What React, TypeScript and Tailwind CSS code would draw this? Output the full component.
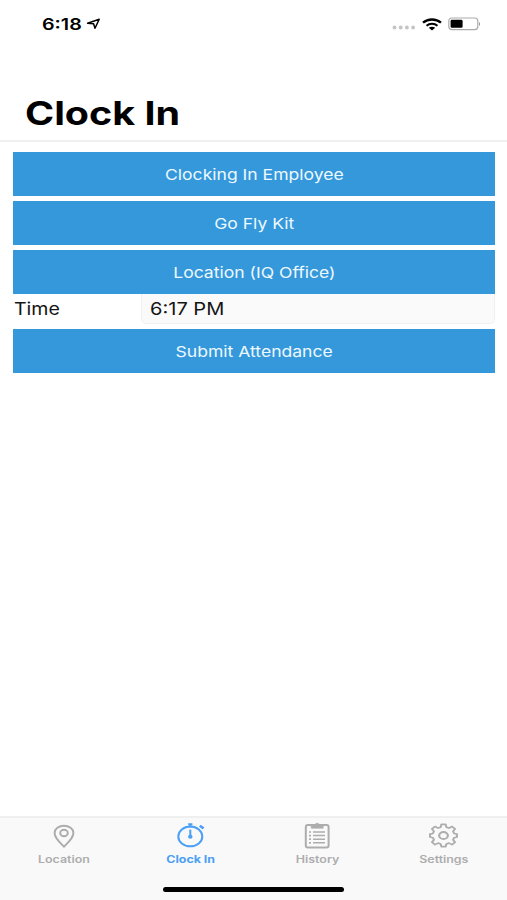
import React from 'react';

const LocationIcon: React.FC = () => (
  <svg width="22" height="24" viewBox="0 0 22 24" fill="none" stroke="currentColor">
    <path d="M11 22.6C8.3 19.8 1.6 14.3 1.6 8.9C1.6 4.9 5.8 1.7 11 1.7s9.4 3.2 9.4 7.2c0 5.4-6.7 10.9-9.4 13.7z" strokeWidth="2" />
    <ellipse cx="11" cy="9" rx="3.8" ry="3.2" strokeWidth="2" />
  </svg>
);

const ClockIcon: React.FC = () => (
  <svg width="28" height="25" viewBox="0 0 28 25" fill="none" stroke="currentColor">
    <ellipse cx="13.3" cy="13.4" rx="12" ry="9.9" strokeWidth="2" />
    <path d="M13.3 .4v4M11.2 1.2h4.2" strokeWidth="2" />
    <path d="M22.8 2.8l3.8 2.6" strokeWidth="2.6" />
    <path d="M13.3 6.6v7" strokeWidth="2" />
    <ellipse cx="13.3" cy="13.8" rx="2.2" ry="2" fill="currentColor" stroke="none" />
  </svg>
);

const HistoryIcon: React.FC = () => (
  <svg width="26" height="27" viewBox="0 0 26 27" fill="none" stroke="currentColor">
    <rect x="1.8" y="3" width="22.8" height="22.6" rx="2" strokeWidth="2" />
    <path d="M7.2 3.6h3.2C10.8 2 11.8 1.2 13.2 1.2s2.4.8 2.8 2.4h3.2v2.6h-12z" fill="currentColor" strokeWidth="0.6" />
    <path d="M9 10h12M9 13.6h12M9 17.2h12M9 20.8h12" strokeWidth="1.5" />
    <path d="M5 10h2M5 13.6h2M5 17.2h2M5 20.8h2" strokeWidth="1.7" />
  </svg>
);

const SettingsIcon: React.FC = () => (
  <svg
    width="29"
    height="25"
    viewBox="0 0 30 32"
    preserveAspectRatio="none"
    fill="none"
    stroke="currentColor"
    strokeLinejoin="round"
  >
    <path
      d="M12.8 1.8h4.4l.8 3.6 2.6 1.1 3.2-2 3.1 3.1-2 3.2 1.1 2.6 3 .8v3.8l-3 .8-1.1 2.6 2 3.2-3.1 3.1-3.2-2-2.6 1.1-.8 3.4h-4.4l-.8-3.4-2.6-1.1-3.2 2-3.1-3.1 2-3.2L4 18.8l-3-.8v-3.8l3-.8 1.1-2.6-2-3.2 3.1-3.1 3.2 2L12 5.4z"
      strokeWidth="2.1"
    />
    <circle cx="15" cy="16" r="4.5" strokeWidth="2.3" />
  </svg>
);

const Button: React.FC<{ label: string }> = ({ label }) => (
  <button className="flex h-11 w-full items-center justify-center bg-[#3498db] pt-0.5 text-[15px] text-[#eef8ff]">
    <span className="inline-block scale-x-[1.17]">{label}</span>
  </button>
);

const Tab: React.FC<{ label: string; active?: boolean; children: React.ReactNode }> = ({
  label,
  active,
  children,
}) => (
  <div
    className={`flex flex-1 flex-col items-center ${active ? 'text-[#4b9ff5]' : 'text-[#adadad]'}`}
  >
    <div className="flex h-[35px] items-center justify-center">{children}</div>
    <span
      className={`inline-block scale-x-[1.24] text-[10px] leading-3 ${active ? 'font-bold' : 'font-semibold'}`}
    >
      {label}
    </span>
  </div>
);

const App: React.FC = () => {
  return (
    <div className="flex h-[900px] w-[507px] flex-col overflow-hidden bg-white font-[Inter,sans-serif] text-black">
      <header className="flex h-[142px] flex-col justify-between border-b-2 border-[#f0f0f0]">
        <div className="flex items-center justify-between pt-3 pr-[26px] pl-[42px]">
          <div className="flex items-center">
            <span className="inline-block w-[44px] origin-left scale-x-[1.23] text-[16px] leading-6 font-semibold">
              6:18
            </span>
            <svg width="15" height="13" viewBox="0 0 15 13" fill="none" stroke="currentColor">
              <path d="M1.6 5.2L13.2 1.2L9 10.2L7.6 5.8z" strokeWidth="1.5" strokeLinejoin="round" />
            </svg>
          </div>
          <div className="flex items-center">
            <svg width="24" height="6" viewBox="0 0 24 6" fill="#c4c4c4" className="mt-2">
              <circle cx="2.5" cy="2.5" r="1.9" />
              <circle cx="8.7" cy="2.5" r="1.9" />
              <circle cx="14.9" cy="2.5" r="1.9" />
              <circle cx="21.1" cy="2.5" r="1.9" />
            </svg>
            <svg width="20" height="13" viewBox="0 0 20 13" fill="none" stroke="currentColor" className="ml-[6px]">
              <path d="M1 4.7C6 .4 14 .4 19 4.7" strokeWidth="2.3" />
              <path d="M4.5 7.7c3.2-2.6 7.8-2.6 11 0" strokeWidth="2.1" />
              <path d="M6.8 9.8c1.8-1.5 4.6-1.5 6.4 0L10 12.6z" fill="currentColor" stroke="none" />
            </svg>
            <svg width="33" height="14" viewBox="0 0 33 14" fill="none" className="ml-[6px]">
              <rect x=".8" y="1" width="29" height="11.6" rx="3" stroke="#ababab" strokeWidth="1.2" />
              <rect x="2.6" y="2.8" width="12" height="8" rx="1.4" fill="#000" />
              <path d="M31.2 5v4c1.2-.4 1.2-3.6 0-4z" fill="#888" />
            </svg>
          </div>
        </div>
        <h1 className="mb-[7px] ml-[25px] w-fit origin-left scale-x-[1.195] text-[33px] leading-10 font-bold">
          Clock In
        </h1>
      </header>

      <main className="flex flex-1 flex-col pt-[10px] pr-[12px] pl-[13px]">
        <div className="flex flex-col gap-[5px]">
          <Button label="Clocking In Employee" />
          <Button label="Go Fly Kit" />
          <Button label="Location (IQ Office)" />
        </div>
        <div className="mb-[5px] flex h-[30px] text-[17px] leading-[30px] text-[#151515]">
          <label className="w-[128px] pl-px">
            <span className="inline-block origin-left scale-x-[1.15]">Time</span>
          </label>
          <div className="flex-1 rounded-b-[5px] border border-t-0 border-[#f0f0f0] bg-[#fafafa] pl-2">
            <span className="inline-block origin-left scale-x-[1.18]">6:17 PM</span>
          </div>
        </div>
        <Button label="Submit Attendance" />
      </main>

      <footer className="flex h-[84px] flex-col items-center justify-between border-t-2 border-[#efefef] bg-[#f9f9f9] pb-2">
        <nav className="flex w-full pl-px">
          <Tab label="Location">
            <LocationIcon />
          </Tab>
          <Tab label="Clock In" active>
            <ClockIcon />
          </Tab>
          <Tab label="History">
            <HistoryIcon />
          </Tab>
          <Tab label="Settings">
            <SettingsIcon />
          </Tab>
        </nav>
        <div className="h-[5px] w-[181px] rounded-full bg-black" />
      </footer>
    </div>
  );
};

export default App;
